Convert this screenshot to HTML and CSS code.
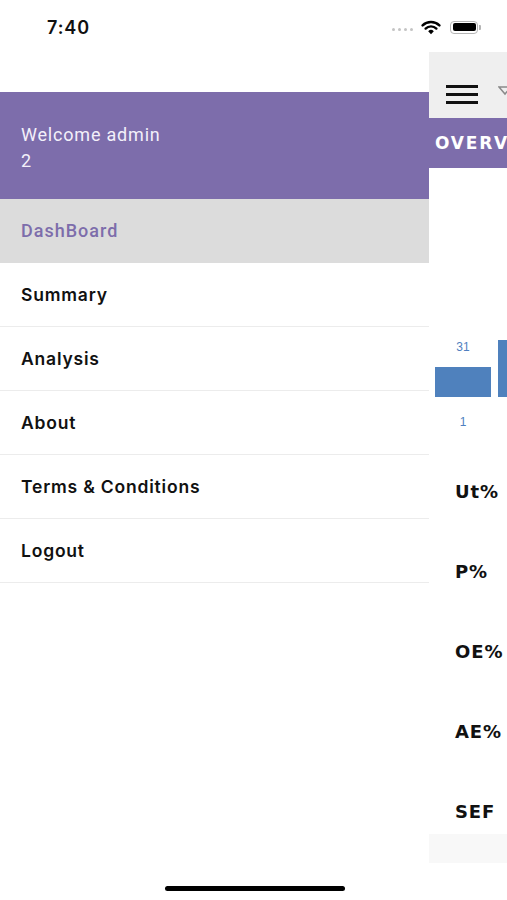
FILE: index.html
```html
<!DOCTYPE html>
<html>
<head>
<meta charset="utf-8">
<link rel="stylesheet" href="styles.css">
</head>
<body>
<div class="screen">
  <div class="statusbar">
    <span class="time">7:40</span>
    <div class="status-icons">
      <span class="signal"><i></i><i></i><i></i><i></i></span>
      <svg class="wifi" width="20" height="15" viewBox="0 0 20 15">
        <path d="M10 14.2 L7.2 11.2 A4 4 0 0 1 12.8 11.2 Z" fill="#000"/>
        <path d="M4.6 8.6 A7.6 7.6 0 0 1 15.4 8.6" fill="none" stroke="#000" stroke-width="2.4" stroke-linecap="round"/>
        <path d="M1.6 5.4 A12 12 0 0 1 18.4 5.4" fill="none" stroke="#000" stroke-width="2.4" stroke-linecap="round"/>
      </svg>
      <span class="battery"><span class="battery-fill"></span></span>
      <span class="battery-nub"></span>
    </div>
  </div>
  <div class="main">
    <nav class="drawer">
      <div class="drawer-gap"></div>
      <div class="drawer-header">
        <div class="welcome">Welcome admin</div>
        <div class="welcome">2</div>
      </div>
      <ul class="menu">
        <li class="menu-item active">DashBoard</li>
        <li class="menu-item">Summary</li>
        <li class="menu-item">Analysis</li>
        <li class="menu-item">About</li>
        <li class="menu-item">Terms &amp; Conditions</li>
        <li class="menu-item">Logout</li>
      </ul>
    </nav>
    <section class="app">
      <div class="app-header">
        <span class="hamburger"><i></i><i></i><i></i></span>
        <svg class="dropdown" width="14" height="10" viewBox="0 0 14 10">
          <path d="M1 1 L13 1 L7 8 Z" fill="none" stroke="#8a8a8a" stroke-width="1.5"/>
        </svg>
      </div>
      <div class="app-tab"><span class="tab-label">OVERVIEW</span></div>
      <div class="app-content">
        <div class="chart">
          <div class="col">
            <span class="bar-value">31</span>
            <span class="bar" style="height:30px"></span>
          </div>
          <div class="col">
            <span class="bar" style="height:57px"></span>
          </div>
        </div>
        <div class="axis"><span class="axis-label">1</span></div>
        <ul class="metrics">
          <li>Ut%</li>
          <li>P%</li>
          <li>OE%</li>
          <li>AE%</li>
          <li>SEF</li>
        </ul>
        <div class="footer-box"></div>
      </div>
    </section>
  </div>
  <div class="home-indicator"></div>
</div>
</body>
</html>
```
FILE: styles.css
```css
* { box-sizing: border-box; }
html, body { margin: 0; padding: 0; background: #fff; }
body { font-family: "Inter", "Liberation Sans", sans-serif; }

.screen {
  position: relative;
  width: 507px;
  height: 900px;
  overflow: hidden;
  background: #fff;
  display: flex;
  flex-direction: column;
}

.statusbar {
  height: 52px;
  flex: none;
  display: flex;
  align-items: center;
  justify-content: space-between;
  padding: 0 26px 0 47px;
}
.time {
  font-size: 18px;
  font-weight: 600;
  color: #111;
  letter-spacing: 0.9px;
  margin-top: 2px;
}
.status-icons {
  display: flex;
  align-items: center;
  margin-top: 2px;
}
.signal { display: flex; gap: 3px; margin-right: 8px; margin-top: 5px; }
.signal i { display: block; width: 3px; height: 3px; border-radius: 50%; background: #c4c4c4; }
.wifi { margin-right: 9px; }
.battery {
  width: 28px;
  height: 13px;
  border: 1.5px solid #b5b5b5;
  border-radius: 4px;
  padding: 1.5px;
  display: flex;
}
.battery-fill { flex: 1; background: #000; border-radius: 2px; }
.battery-nub { width: 2px; height: 5px; background: #b5b5b5; border-radius: 0 1px 1px 0; margin-left: 1px; }

.main {
  flex: 1;
  display: flex;
  min-height: 0;
}

.drawer {
  width: 429px;
  flex: none;
  display: flex;
  flex-direction: column;
  background: #fff;
}
.drawer-gap { height: 40px; }
.drawer-header {
  height: 107px;
  background: #7d6dab;
  padding: 30px 21px 0;
}
.welcome {
  font-family: "Roboto", "Liberation Sans", sans-serif;
  font-size: 18px;
  line-height: 26px;
  letter-spacing: 0.8px;
  color: #f3f0fa;
}
.menu { list-style: none; margin: 0; padding: 0; }
.menu-item {
  height: 64px;
  display: flex;
  align-items: center;
  padding-left: 21px;
  border-bottom: 1px solid #ececec;
  font-size: 17.5px;
  font-weight: 600;
  color: #111;
  letter-spacing: 0.8px;
}
.menu-item.active {
  background: #dcdcdc;
  color: #7d6dab;
  border-bottom-color: #dcdcdc;
  font-family: "Roboto", "Liberation Sans", sans-serif;
  font-weight: 500;
  font-size: 18px;
  letter-spacing: 1px;
}

.app {
  flex: 1;
  min-width: 0;
  display: flex;
  flex-direction: column;
  overflow: hidden;
}
.app-header {
  height: 66px;
  background: #efefef;
  display: flex;
  align-items: flex-end;
  padding: 0 0 14px 17px;
  gap: 20px;
}
.hamburger { display: flex; flex-direction: column; gap: 5px; }
.hamburger i { display: block; width: 32px; height: 3px; background: #111; }
.dropdown { margin-bottom: 8px; flex: none; }
.app-tab {
  height: 50px;
  background: #7d6dab;
  display: flex;
  align-items: center;
  padding-left: 6px;
  overflow: hidden;
}
.tab-label {
  color: #fff;
  font-family: "DejaVu Sans", "Liberation Sans", sans-serif;
  font-weight: 700;
  font-size: 17px;
  letter-spacing: 1.8px;
  white-space: nowrap;
}
.app-content {
  flex: 1;
  display: flex;
  flex-direction: column;
}
.chart {
  display: flex;
  align-items: flex-end;
  gap: 7px;
  padding-left: 6px;
  margin-top: 172px;
  height: 57px;
}
.col { display: flex; flex-direction: column; align-items: center; flex: none; width: 56px; }
.bar-value {
  font-family: "Liberation Sans", sans-serif;
  font-size: 12px;
  line-height: 16px;
  color: #4f7fc0;
  margin-bottom: 12px;
}
.bar { display: block; width: 100%; background: #4f81bd; }
.axis { padding-left: 6px; margin-top: 17px; }
.axis-label {
  display: block;
  width: 56px;
  text-align: center;
  font-family: "Liberation Sans", sans-serif;
  font-size: 12px;
  line-height: 16px;
  color: #4f7fc0;
}
.metrics {
  list-style: none;
  margin: 51px 0 0;
  padding: 0 0 0 26px;
  display: flex;
  flex-direction: column;
  gap: 58px;
}
.metrics li {
  font-family: "DejaVu Sans", "Liberation Sans", sans-serif;
  font-size: 18px;
  line-height: 22px;
  font-weight: 700;
  letter-spacing: 0.9px;
  color: #111;
  white-space: nowrap;
}
.footer-box {
  height: 29px;
  margin-top: 11px;
  background: #f8f8f8;
}

.home-indicator {
  position: absolute;
  left: 165px;
  bottom: 9px;
  width: 180px;
  height: 5px;
  border-radius: 3px;
  background: #000;
}
```
